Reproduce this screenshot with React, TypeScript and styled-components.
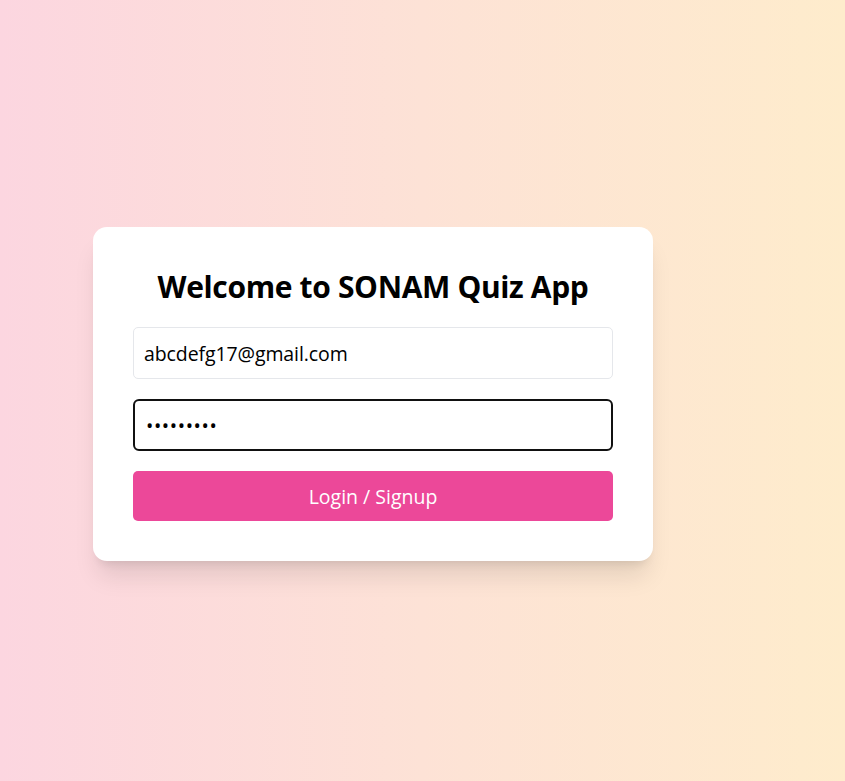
import React from "react";
import styled, { createGlobalStyle } from "styled-components";

const GlobalStyle = createGlobalStyle`
  html, body { margin: 0; padding: 0; }
  body { font-family: "Open Sans", "Noto Sans", sans-serif; color: #000; }
  * { box-sizing: border-box; }
`;

const Page = styled.div`
  min-height: 100vh;
  display: flex;
  align-items: center;
  padding: 7px 0 0 93px;
  background: linear-gradient(to right, rgb(252, 214, 224), rgb(253, 226, 214), rgb(254, 236, 204));
`;

const Card = styled.div`
  width: 560px;
  padding: 40px;
  background: #fff;
  border-radius: 14px;
  box-shadow: 0 20px 25px -5px rgba(0, 0, 0, 0.1), 0 8px 10px -6px rgba(0, 0, 0, 0.1);
  display: flex;
  flex-direction: column;
  gap: 20px;
`;

const Title = styled.h1`
  margin: 0 0 4px;
  padding-top: 2px;
  height: 36px;
  font-size: 30px;
  line-height: 36px;
  font-weight: 700;
  text-align: center;
  letter-spacing: -0.35px;
`;

const Field = styled.input<{ $active?: boolean }>`
  width: 100%;
  height: 52px;
  padding: 0 ${(p) => (p.$active ? "11px" : "10px")};
  font-family: inherit;
  font-size: 19.5px;
  letter-spacing: ${(p) => (p.$active ? "0.6px" : "-0.1px")};
  color: #000;
  background: #fff;
  border: ${(p) => (p.$active ? "2px solid #111" : "1px solid #e5e7eb")};
  border-radius: ${(p) => (p.$active ? "6px" : "5px")};
  outline: none;
  caret-color: #000;
`;

const Button = styled.button`
  width: 100%;
  height: 50px;
  border: none;
  border-radius: 5px;
  background: #ec4899;
  color: #fff;
  font-family: inherit;
  font-size: 19.5px;
  cursor: pointer;
`;

export default function App() {
  return (
    <>
      <GlobalStyle />
      <Page>
        <Card>
          <Title>Welcome to SONAM Quiz App</Title>
          <Field type="email" defaultValue="abcdefg17@gmail.com" />
          <Field type="password" defaultValue="123456789" $active autoFocus />
          <Button>Login / Signup</Button>
        </Card>
      </Page>
    </>
  );
}
